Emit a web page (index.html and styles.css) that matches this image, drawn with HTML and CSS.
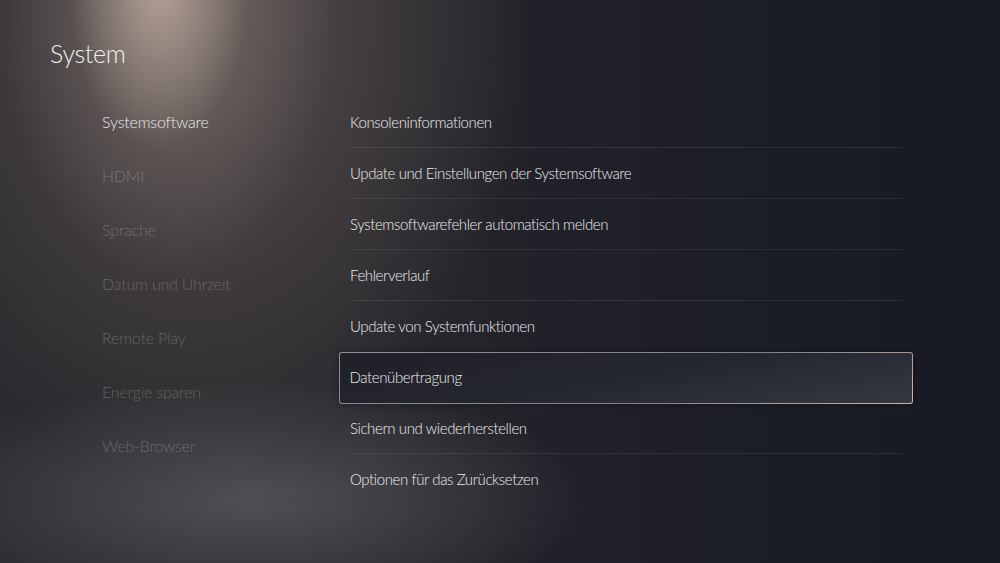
FILE: index.html
```html
<!DOCTYPE html>
<html lang="de">
<head>
<meta charset="utf-8">
<title>System</title>
<link rel="stylesheet" href="styles.css">
</head>
<body>
<div class="screen">
  <h1 class="title">System</h1>
  <div class="main">
    <nav class="nav">
      <div class="nav-item active">Systemsoftware</div>
      <div class="nav-item">HDMI</div>
      <div class="nav-item">Sprache</div>
      <div class="nav-item">Datum und Uhrzeit</div>
      <div class="nav-item">Remote Play</div>
      <div class="nav-item">Energie sparen</div>
      <div class="nav-item">Web-Browser</div>
    </nav>
    <ul class="list">
      <li class="row">Konsoleninformationen</li>
      <li class="row">Update und Einstellungen der Systemsoftware</li>
      <li class="row">Systemsoftwarefehler automatisch melden</li>
      <li class="row">Fehlerverlauf</li>
      <li class="row before-sel">Update von Systemfunktionen</li>
      <li class="row selected">Datenübertragung</li>
      <li class="row">Sichern und wiederherstellen</li>
      <li class="row last">Optionen für das Zurücksetzen</li>
    </ul>
  </div>
</div>
</body>
</html>
```

FILE: styles.css
```css
* { box-sizing: border-box; }
html, body { margin: 0; padding: 0; }
body { width: 1000px; height: 563px; overflow: hidden; background: #1a1c24; }

.screen {
  width: 1000px;
  height: 563px;
  font-family: Lato, "Noto Sans", sans-serif;
  font-weight: 300;
  color: #e6e6e8;
  display: flex;
  flex-direction: column;
  background:
    radial-gradient(ellipse 90px 170px at 158px -20px, rgba(205,185,170,0.7), rgba(205,185,170,0) 100%),
    radial-gradient(ellipse 170px 280px at 170px 0px, rgba(150,134,126,0.5), rgba(150,134,126,0) 100%),
    radial-gradient(ellipse 330px 460px at 200px 20px, rgba(100,90,88,0.8), rgba(100,90,88,0) 100%),
    radial-gradient(ellipse 340px 120px at 250px 500px, rgba(95,95,102,0.7), rgba(95,95,102,0) 100%),
    linear-gradient(90deg, #2b2a2e 0%, #29282d 35%, #1f2028 60%, #171a23 100%);
}

.title {
  margin: 0;
  padding: 38px 0 0 50px;
  font-size: 25px;
  font-weight: 300;
  letter-spacing: -0.3px;
  line-height: 30px;
  color: #f0f0f0;
}

.main {
  display: flex;
  margin-top: 29px;
}

.nav {
  width: 339px;
  padding-left: 102px;
  display: flex;
  flex-direction: column;
  margin-top: -2px;
}

.nav-item {
  height: 54px;
  line-height: 54px;
  font-size: 16px;
  letter-spacing: -0.2px;
  color: rgba(255,255,255,0.24);
  white-space: nowrap;
}
.nav-item.active { color: #e8e8ea; }

.list {
  list-style: none;
  margin: 0;
  padding: 0;
  width: 574px;
  display: flex;
  flex-direction: column;
}

.row {
  position: relative;
  height: 51px;
  line-height: 51px;
  padding-left: 11px;
  font-size: 15px;
  letter-spacing: -0.4px;
  color: #ececee;
  white-space: nowrap;
}
.row::after {
  content: "";
  position: absolute;
  left: 11px;
  right: 11px;
  bottom: 0;
  height: 1px;
  background: rgba(255,255,255,0.08);
}
.row.last::after, .row.before-sel::after, .row.selected::after { display: none; }

.row.selected {
  border: 1.5px solid transparent;
  border-radius: 3px;
  height: 52px;
  margin-bottom: -1px;
  line-height: 49px;
  padding-left: 9.5px;
  background:
    linear-gradient(170deg, #202027 0%, #25272f 50%, #333844 100%) padding-box,
    linear-gradient(160deg, #8e9098 0%, #7e8089 60%, #d8b49a 100%) border-box;
  box-shadow: 0 0 6px rgba(0,0,0,0.35);
}
```
